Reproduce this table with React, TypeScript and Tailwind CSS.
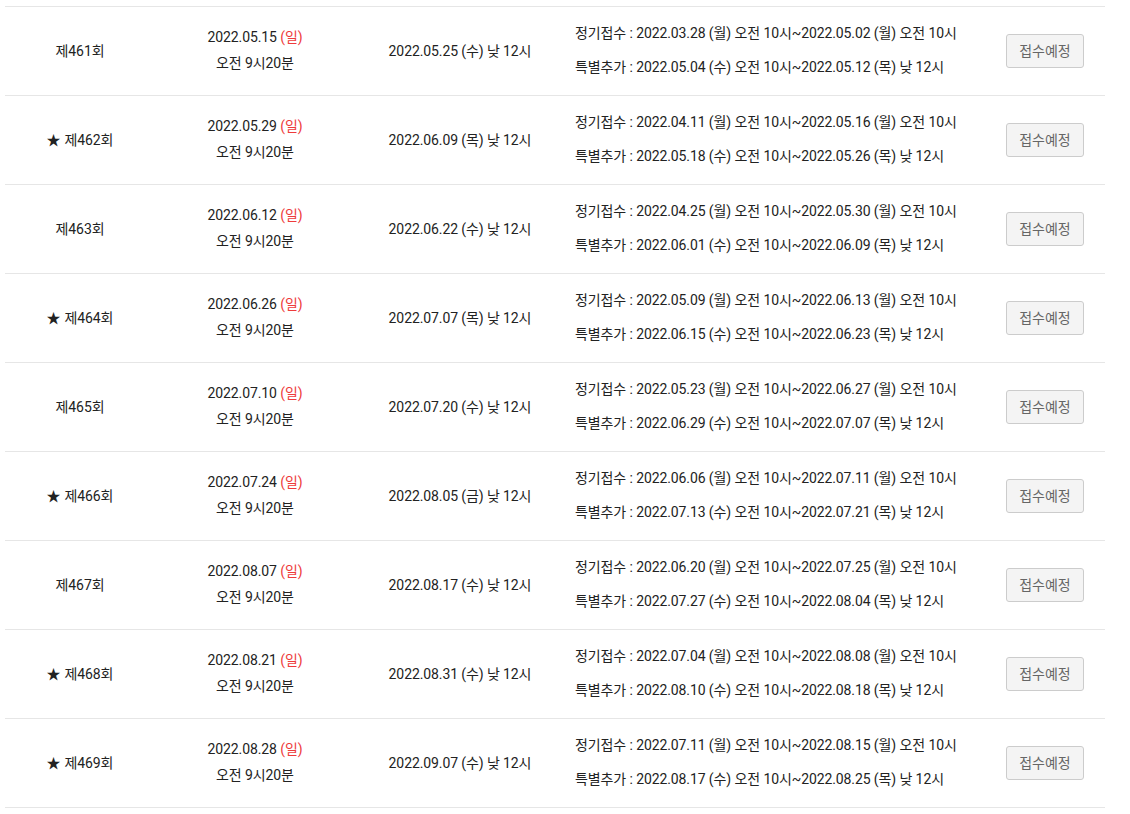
import React from 'react';

type Round = {
  no: number;
  special: boolean;
  examDate: string;
  examDay: string;
  resultDate: string;
  regular: string;
  extra: string;
};

const rounds: Round[] = [
  { no: 461, special: false, examDate: '2022.05.15', examDay: '일', resultDate: '2022.05.25 (수) 낮 12시', regular: '2022.03.28 (월) 오전 10시~2022.05.02 (월) 오전 10시', extra: '2022.05.04 (수) 오전 10시~2022.05.12 (목) 낮 12시' },
  { no: 462, special: true, examDate: '2022.05.29', examDay: '일', resultDate: '2022.06.09 (목) 낮 12시', regular: '2022.04.11 (월) 오전 10시~2022.05.16 (월) 오전 10시', extra: '2022.05.18 (수) 오전 10시~2022.05.26 (목) 낮 12시' },
  { no: 463, special: false, examDate: '2022.06.12', examDay: '일', resultDate: '2022.06.22 (수) 낮 12시', regular: '2022.04.25 (월) 오전 10시~2022.05.30 (월) 오전 10시', extra: '2022.06.01 (수) 오전 10시~2022.06.09 (목) 낮 12시' },
  { no: 464, special: true, examDate: '2022.06.26', examDay: '일', resultDate: '2022.07.07 (목) 낮 12시', regular: '2022.05.09 (월) 오전 10시~2022.06.13 (월) 오전 10시', extra: '2022.06.15 (수) 오전 10시~2022.06.23 (목) 낮 12시' },
  { no: 465, special: false, examDate: '2022.07.10', examDay: '일', resultDate: '2022.07.20 (수) 낮 12시', regular: '2022.05.23 (월) 오전 10시~2022.06.27 (월) 오전 10시', extra: '2022.06.29 (수) 오전 10시~2022.07.07 (목) 낮 12시' },
  { no: 466, special: true, examDate: '2022.07.24', examDay: '일', resultDate: '2022.08.05 (금) 낮 12시', regular: '2022.06.06 (월) 오전 10시~2022.07.11 (월) 오전 10시', extra: '2022.07.13 (수) 오전 10시~2022.07.21 (목) 낮 12시' },
  { no: 467, special: false, examDate: '2022.08.07', examDay: '일', resultDate: '2022.08.17 (수) 낮 12시', regular: '2022.06.20 (월) 오전 10시~2022.07.25 (월) 오전 10시', extra: '2022.07.27 (수) 오전 10시~2022.08.04 (목) 낮 12시' },
  { no: 468, special: true, examDate: '2022.08.21', examDay: '일', resultDate: '2022.08.31 (수) 낮 12시', regular: '2022.07.04 (월) 오전 10시~2022.08.08 (월) 오전 10시', extra: '2022.08.10 (수) 오전 10시~2022.08.18 (목) 낮 12시' },
  { no: 469, special: true, examDate: '2022.08.28', examDay: '일', resultDate: '2022.09.07 (수) 낮 12시', regular: '2022.07.11 (월) 오전 10시~2022.08.15 (월) 오전 10시', extra: '2022.08.17 (수) 오전 10시~2022.08.25 (목) 낮 12시' },
];

export default function App() {
  return (
    <div
      className="min-h-[814px] bg-white pt-[6px] pl-[5px] text-[14px] tracking-[-0.1px] text-[#222]"
      style={{ fontFamily: 'Roboto, "Noto Sans CJK KR", sans-serif' }}
    >
      <div className="w-[1100px] border-t border-[#e6e6e6]">
        {rounds.map((r) => (
          <div
            key={r.no}
            className="grid h-[89px] grid-cols-[150px_200px_210px_420px_120px] items-center border-b border-[#e6e6e6]"
          >
            {/* 회차 */}
            <div className="text-center">
              {r.special && <span className="mr-1">★</span>}제{r.no}회
            </div>

            {/* 시험일 */}
            <div className="pb-[2px] text-center leading-[26px]">
              <div>
                {r.examDate} <span className="text-[#ee3b3b]">({r.examDay})</span>
              </div>
              <div>오전 9시20분</div>
            </div>

            {/* 성적발표 */}
            <div className="text-center">{r.resultDate}</div>

            {/* 접수기간 */}
            <div className="flex flex-col gap-[14px] pb-[3px] pl-[10px] leading-[20px]">
              <div>정기접수 : {r.regular}</div>
              <div>특별추가 : {r.extra}</div>
            </div>

            {/* 상태 */}
            <div className="flex justify-center">
              <button className="h-[34px] w-[78px] rounded-[3px] border border-[#ccc] bg-[#f4f4f4] text-[14px] tracking-normal text-[#666]">
                접수예정
              </button>
            </div>
          </div>
        ))}
      </div>
    </div>
  );
}
